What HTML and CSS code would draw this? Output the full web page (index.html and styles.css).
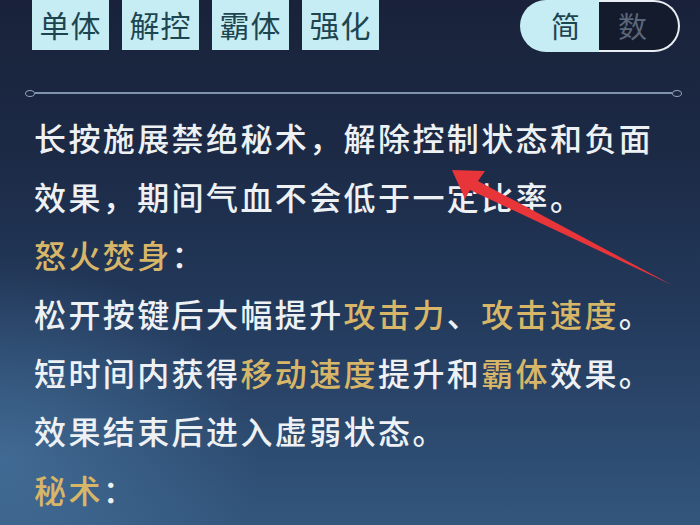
FILE: index.html
```html
<!DOCTYPE html>
<html lang="zh">
<head>
<meta charset="utf-8">
<link rel="stylesheet" href="styles.css">
</head>
<body>
<div class="page">
  <div class="header">
    <div class="tags">
      <span class="tag">单体</span>
      <span class="tag">解控</span>
      <span class="tag">霸体</span>
      <span class="tag">强化</span>
    </div>
    <div class="toggle">
      <span class="opt on">简</span>
      <span class="opt off">数</span>
    </div>
  </div>
  <div class="sep">
    <span class="end"></span>
    <span class="bar"></span>
    <span class="end"></span>
  </div>
  <div class="desc">
    <div class="line">长按施展禁绝秘术，解除控制状态和负面</div>
    <div class="line">效果，期间气血不会低于一定比率。</div>
    <div class="line"><span class="gold">怒火焚身</span>：</div>
    <div class="line">松开按键后大幅提升<span class="gold">攻击力</span>、<span class="gold">攻击速度</span>。</div>
    <div class="line">短时间内获得<span class="gold">移动速度</span>提升和<span class="gold">霸体</span>效果。</div>
    <div class="line">效果结束后进入虚弱状态。</div>
    <div class="line"><span class="gold">秘术</span>：</div>
  </div>
  <svg class="arrow" width="700" height="525" viewBox="0 0 700 525">
    <polygon points="452,170 485,171 478,181 672,285 470,190 465,199" fill="#e8353a"/>
  </svg>
</div>
</body>
</html>
```
FILE: styles.css
```css
html, body {
  margin: 0;
  padding: 0;
}
body {
  width: 700px;
  height: 525px;
  overflow: hidden;
  font-family: "Noto Sans CJK SC", "Noto Sans", sans-serif;
}
.page {
  position: relative;
  width: 700px;
  height: 525px;
  background:
    radial-gradient(ellipse 260px 200px at 0px 460px, rgba(80,130,175,0.55), rgba(80,130,175,0) 100%),
    linear-gradient(180deg, #19223a 0%, #1c2a46 30%, #233a5c 60%, #2d4b70 85%, #33567c 100%);
}
.header {
  display: flex;
  justify-content: space-between;
  align-items: flex-start;
  padding: 0 20px 0 32px;
  height: 52px;
}
.tags {
  display: flex;
  gap: 13px;
}
.tag {
  width: 77px;
  height: 50px;
  background: #c6ecf4;
  color: #1d4550;
  font-size: 30px;
  line-height: 48px;
  text-align: center;
  letter-spacing: 1px;
}
.toggle {
  display: flex;
  width: 160px;
  height: 52px;
}
.opt {
  flex: 1;
  font-size: 29px;
  line-height: 50px;
  text-align: center;
  box-sizing: border-box;
}
.opt.on {
  background: #c6ecf4;
  color: #1d4550;
  border-radius: 0 0 0 26px;
  border-top-left-radius: 26px;
  padding-left: 12px;
}
.opt.off {
  background: #131b2c;
  color: #5b6678;
  border: 2px solid #e9eef4;
  border-left: none;
  border-radius: 0 26px 26px 0;
  line-height: 46px;
  padding-right: 12px;
}
.sep {
  display: flex;
  align-items: center;
  margin: 38px 18px 0 25px;
  height: 6px;
}
.bar {
  flex: 1;
  height: 2px;
  background: #8093ad;
}
.end {
  width: 8px;
  height: 5px;
  border: 1.5px solid #8ea1b9;
  border-radius: 50%;
}
.desc {
  padding: 12px 0 0 34px;
  color: #eef1f4;
  font-size: 32px;
  font-weight: 500;
  letter-spacing: 2.4px;
  line-height: 58.7px;
}
.line {
  white-space: nowrap;
  height: 58.7px;
}
.gold {
  color: #d8b668;
}
.arrow {
  position: absolute;
  left: 0;
  top: 0;
}
```
